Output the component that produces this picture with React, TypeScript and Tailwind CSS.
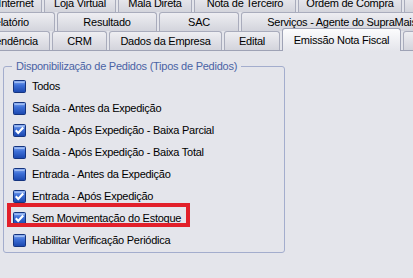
import React from "react";

type TabDef = { label: string; w: string; selected?: boolean };

const row1: TabDef[] = [
  { label: "Internet", w: "w-[52px]" },
  { label: "Loja Virtual", w: "w-[72px]" },
  { label: "Mala Direta", w: "w-[74px]" },
  { label: "Nota de Terceiro", w: "w-[102px]" },
  { label: "Ordem de Compra", w: "w-[104px]" },
  { label: "Contratos", w: "w-[80px]" },
];

const row2: TabDef[] = [
  { label: "Relatório", w: "w-[94px]" },
  { label: "Resultado", w: "w-[100px]" },
  { label: "SAC", w: "w-[80px]" },
  { label: "Serviços - Agente do SupraMais", w: "w-[202px]" },
];

const row3: TabDef[] = [
  { label: "Pendência", w: "w-[74px]" },
  { label: "CRM", w: "w-[55px]" },
  { label: "Dados da Empresa", w: "w-[113px]" },
  { label: "Edital", w: "w-[56px]" },
  { label: "Emissão Nota Fiscal", w: "w-[119px]", selected: true },
  { label: "Geral", w: "w-[60px]" },
];

const options = [
  { label: "Todos", checked: false },
  { label: "Saída - Antes da Expedição", checked: false },
  { label: "Saída - Após Expedição - Baixa Parcial", checked: true },
  { label: "Saída - Após Expedição - Baixa Total", checked: false },
  { label: "Entrada - Antes da Expedição", checked: false },
  { label: "Entrada - Após Expedição", checked: true },
  { label: "Sem Movimentação do Estoque", checked: true, marked: true },
  { label: "Habilitar Verificação Periódica", checked: false },
];

function Tab({ tab }: { tab: TabDef }) {
  if (tab.selected) {
    return (
      <div
        className={`${tab.w} relative z-10 -mb-px h-[23px] shrink-0 rounded-t-[3px] border border-b-0 border-[#9ea2b5] bg-gradient-to-b from-[#fcfcfd] to-[#e4e5eb] flex items-center justify-center whitespace-nowrap`}
      >
        {tab.label}
      </div>
    );
  }
  return (
    <div
      className={`${tab.w} h-[19px] shrink-0 rounded-t-[3px] border border-b-0 border-[#a9acbc] bg-gradient-to-b from-[#eeeef2] to-[#d3d4dc] flex items-center justify-center whitespace-nowrap`}
    >
      {tab.label}
    </div>
  );
}

function CheckBox({ checked }: { checked: boolean }) {
  return (
    <svg width="13" height="13" viewBox="0 0 13 13" className="shrink-0">
      <defs>
        <linearGradient id="cbFill" x1="0" y1="0" x2="0" y2="1">
          <stop offset="0" stopColor="#86aaf0" />
          <stop offset="0.4" stopColor="#3e70d8" />
          <stop offset="1" stopColor="#1a46ad" />
        </linearGradient>
      </defs>
      <rect x="0.5" y="0.5" width="12" height="12" rx="1" fill="url(#cbFill)" stroke="#15347f" />
      <rect x="1.5" y="1.5" width="10" height="1.5" fill="#b4ccf7" opacity="0.7" />
      {checked && (
        <path d="M2.8 6.3 L5.2 8.9 L10.2 3.4" fill="none" stroke="#ffffff" strokeWidth="2.2" />
      )}
    </svg>
  );
}

export default function App() {
  return (
    <div className="w-[413px] h-[278px] overflow-hidden bg-[#e4e5eb] font-['Liberation_Sans',Arial,sans-serif] text-[11px] tracking-[-0.25px] text-black">
      {/* tab rows */}
      <div className="-mt-[7px] flex flex-col">
        <div className="h-[19px] ml-[-10px] flex items-end gap-[2px]">
          {row1.map((t) => (
            <Tab key={t.label} tab={t} />
          ))}
        </div>
        <div className="h-[19px] ml-[-39px] flex items-end gap-[2px]">
          {row2.map((t) => (
            <Tab key={t.label} tab={t} />
          ))}
        </div>
        <div className="h-[19px] ml-[-24px] flex items-end gap-[2px]">
          {row3.map((t) => (
            <Tab key={t.label} tab={t} />
          ))}
        </div>
      </div>

      {/* panel */}
      <div className="border-t border-[#9ea2b5] pt-[9px]">
        <fieldset className="ml-[3px] w-[282px] rounded-[3px] border border-[#a3adcd] pl-[9px] pt-[2px] pb-[1px]">
          <legend className="ml-[-1px] px-[4px] leading-[13px] text-[#4a63a5]">
            Disponibilização de Pedidos (Tipos de Pedidos)
          </legend>
          {options.map((o) => (
            <div key={o.label} className="relative h-[22px] flex items-center gap-[6px] whitespace-nowrap">
              <CheckBox checked={o.checked} />
              <span>{o.label}</span>
              {o.marked && (
                <div className="absolute left-[-6px] top-[-4px] w-[183px] h-[24px] border-4 border-[#e2202a] pointer-events-none" />
              )}
            </div>
          ))}
        </fieldset>
      </div>
    </div>
  );
}
